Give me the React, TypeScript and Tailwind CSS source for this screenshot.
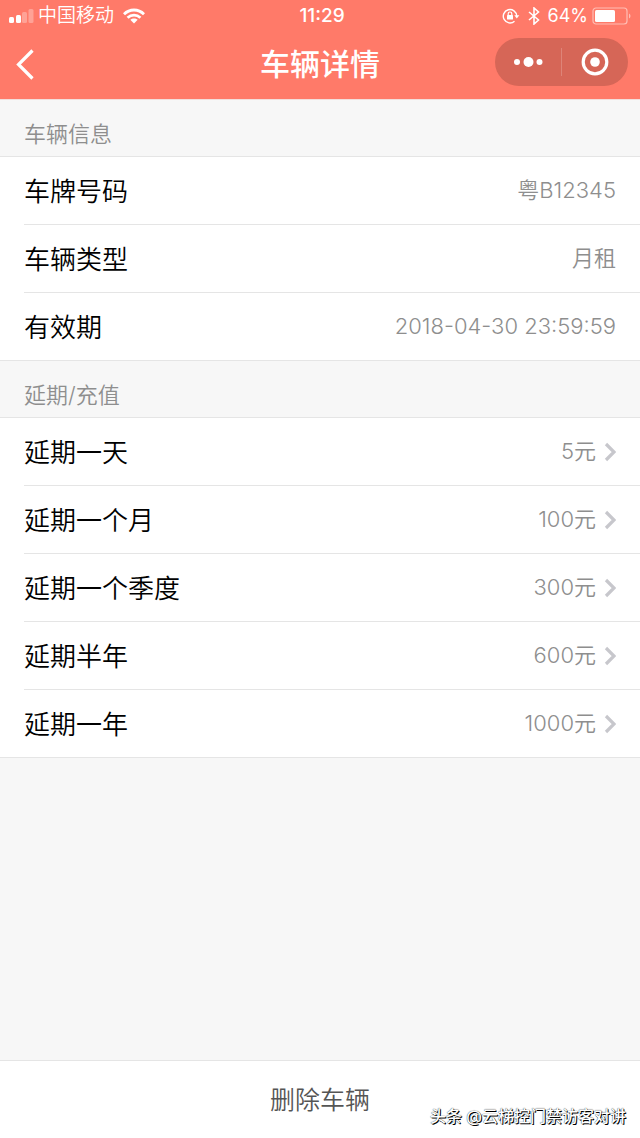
import { ReactNode } from "react";

const vehicleInfo = [
  { label: "车牌号码", value: "粤B12345" },
  { label: "车辆类型", value: "月租" },
  { label: "有效期", value: "2018-04-30 23:59:59" },
];

const renewOptions = [
  { label: "延期一天", price: "5元" },
  { label: "延期一个月", price: "100元" },
  { label: "延期一个季度", price: "300元" },
  { label: "延期半年", price: "600元" },
  { label: "延期一年", price: "1000元" },
];

function StatusBar() {
  return (
    <div className="grid h-8 grid-cols-[1fr_auto_1fr] items-center px-2 text-[19px] leading-8">
      <div className="flex items-center gap-1">
        <svg width="26" height="16" viewBox="0 0 26 16" fill="#fff">
          <rect x="1" y="9" width="5" height="6" rx="1.5" />
          <rect x="8" y="7" width="5" height="8" rx="1.5" />
          <rect x="14" y="4" width="5" height="11" rx="1.5" opacity="0.3" />
          <rect x="20.5" y="1" width="5" height="14" rx="1.5" opacity="0.3" />
        </svg>
        <span className="font-[350]">中国移动</span>
        <svg className="ml-1" width="24" height="16" viewBox="0 0 24 16" fill="none" stroke="#fff" strokeWidth="2.8">
          <path d="M2 6.2C7.6 0.6 16.4 0.6 22 6.2" />
          <path d="M5.6 9.8C9.2 6.3 14.8 6.3 18.4 9.8" />
          <path d="M12 15.5L8.3 11.8C10.4 9.9 13.6 9.9 15.7 11.8Z" fill="#fff" stroke="none" />
        </svg>
      </div>
      <span className="pl-1 text-center font-medium">11:29</span>
      <div className="flex items-center justify-end">
        <svg width="18" height="16" viewBox="0 0 18 16" fill="none" stroke="#fff" strokeWidth="1.4">
          <path d="M12.5 13.2A6.7 6.7 0 1 1 14.7 8" />
          <path d="M12.3 7.3H17.3L14.8 10.6Z" fill="#fff" stroke="none" />
          <rect x="5" y="7" width="6" height="4.6" rx="0.6" fill="#fff" stroke="none" />
          <path d="M6.2 7.2V5.8A1.8 1.8 0 0 1 9.8 5.8V7.2" strokeWidth="1.2" />
        </svg>
        <svg className="ml-2" width="12" height="18" viewBox="0 0 12 18" fill="none" stroke="#fff" strokeWidth="1.6">
          <path d="M1 5L10.5 13L6 17V1L10.5 5L1 13" />
        </svg>
        <span className="ml-2 text-lg leading-8">64%</span>
        <svg className="ml-1" width="40" height="18" viewBox="0 0 40 18" fill="none">
          <rect x="1" y="1" width="34" height="16" rx="3" stroke="#fff" strokeOpacity="0.5" strokeWidth="1.2" />
          <rect x="3" y="3" width="20" height="12" rx="1.5" fill="#fff" />
          <path d="M37 6.5C39 7.5 39 10.5 37 11.5Z" fill="#fff" opacity="0.5" />
        </svg>
      </div>
    </div>
  );
}

function NavBar() {
  return (
    <div className="grid grow grid-cols-[1fr_auto_1fr] items-center px-3 pb-2">
      <button aria-label="返回" className="mt-1 ml-1 w-8">
        <svg width="20" height="32" viewBox="0 0 20 32" fill="none" stroke="#fff" strokeWidth="3.2">
          <path d="M16.5 2.5L2.5 16.5L16.5 30.5" />
        </svg>
      </button>
      <h1 className="mt-1 text-center text-3xl font-medium">车辆详情</h1>
      <div className="flex h-12 w-[133px] items-center justify-self-end rounded-full bg-[#d66657]">
        <button aria-label="更多" className="flex flex-1 justify-center">
          <svg width="30" height="12" viewBox="0 0 30 12" fill="#fff">
            <circle cx="4" cy="6" r="3" />
            <circle cx="15.5" cy="6" r="5" />
            <circle cx="26.5" cy="6" r="3" />
          </svg>
        </button>
        <span className="h-7 w-px bg-white/20" />
        <button aria-label="关闭" className="flex flex-1 justify-center">
          <svg width="28" height="28" viewBox="0 0 28 28">
            <circle cx="14" cy="14" r="11.8" fill="none" stroke="#fff" strokeWidth="3.2" />
            <circle cx="14" cy="14" r="4.8" fill="#fff" />
          </svg>
        </button>
      </div>
    </div>
  );
}

function Section({ title, children }: { title: string; children: ReactNode }) {
  return (
    <section>
      <h2 className="px-6 pt-[18px] pb-1.5 text-[22px] leading-8 font-[350] text-[#8e8e8e]">{title}</h2>
      <ul className="border-y border-[#e5e5e5] bg-white pl-6">{children}</ul>
    </section>
  );
}

const rowClass = "flex h-[67px] w-full items-center justify-between pr-6 text-left";
const labelClass = "pt-0.5 text-[26px] font-[350] text-black";
const itemClass = "border-b border-[#e5e5e5] last:border-b-0";

function App() {
  return (
    <div className="relative flex min-h-screen flex-col bg-[#f7f7f7] font-[Inter,'Noto_Sans_CJK_SC',sans-serif]">
      <header className="flex h-[100px] flex-col border-b border-[#f3dedb] bg-[#ff7a69] text-white">
        <StatusBar />
        <NavBar />
      </header>

      <main className="grow">
        <Section title="车辆信息">
          {vehicleInfo.map((item) => (
            <li key={item.label} className={itemClass}>
              <div className={rowClass}>
                <span className={labelClass}>{item.label}</span>
                <span className="text-[22px] font-[350] text-[#8e8e8e]">{item.value}</span>
              </div>
            </li>
          ))}
        </Section>

        <Section title="延期/充值">
          {renewOptions.map((item) => (
            <li key={item.label} className={itemClass}>
              <button className={rowClass}>
                <span className={labelClass}>{item.label}</span>
                <span className="flex items-center gap-2 text-[22px] font-[350] text-[#8e8e8e]">
                  {item.price}
                  <svg width="12" height="20" viewBox="0 0 12 20" fill="none" stroke="#c7c7cc" strokeWidth="3.2">
                    <path d="M2 2L10 10L2 18" />
                  </svg>
                </span>
              </button>
            </li>
          ))}
        </Section>
      </main>

      <footer className="border-t border-[#e5e5e5] bg-white">
        <button className="h-[77px] w-full pt-0.5 text-[25px] font-[350] text-[#555555]">删除车辆</button>
      </footer>

      <p className="absolute right-3.5 bottom-2.5 text-base font-medium text-white [text-shadow:1px_1px_0_#000,0_0_1px_#000]">
        头条 @云梯控门禁访客对讲
      </p>
    </div>
  );
}

export default App;
